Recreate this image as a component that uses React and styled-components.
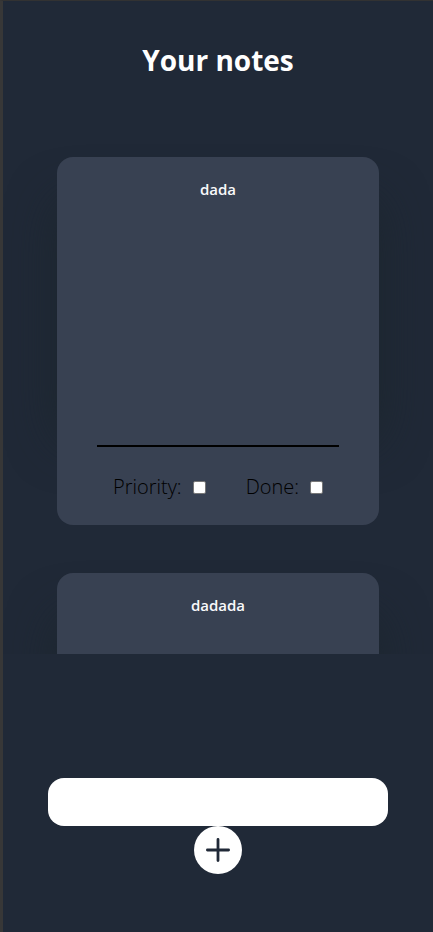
import React from "react";
import styled, { createGlobalStyle } from "styled-components";

const GlobalStyle = createGlobalStyle`
  * { box-sizing: border-box; }
  body { margin: 0; background: #202937; font-family: "Segoe UI", "Open Sans", "Noto Sans", sans-serif; }
`;

const Page = styled.main`
  min-height: 100vh;
  display: flex;
  flex-direction: column;
  align-items: center;
  border-top: 1px solid #323232;
  border-left: 3px solid #373737;
  background: #202937;
`;

const Title = styled.h1`
  margin: 41px 0 31px;
  color: #fff;
  font-size: 28px;
  font-weight: 700;
  line-height: 36px;
`;

const NoteList = styled.section`
  isolation: isolate;
  width: 100%;
  height: 545px;
  padding: 48px 54px;
  display: flex;
  flex-direction: column;
  gap: 48px;
  overflow-y: auto;
  scrollbar-width: none;
`;

const NoteCard = styled.article`
  position: relative;
  flex: none;
  min-height: 368px;
  padding: 20px 40px;
  display: flex;
  flex-direction: column;
  align-items: center;
  border-radius: 16px;
  background: #384152;

  &::before {
    content: "";
    position: absolute;
    z-index: -1;
    inset: 44px 0 84px;
    border-radius: 16px;
    box-shadow: 0 0 48px rgba(28, 38, 44, 0.9);
  }
`;

const NoteText = styled.p`
  flex: 1;
  width: 100%;
  margin: 0;
  border-bottom: 2px solid #000;
  color: #f8f9fa;
  font-size: 15px;
  font-weight: 600;
  line-height: 24px;
  text-align: center;
`;

const Options = styled.div`
  display: flex;
  gap: 40px;
  padding: 26px 0 4px;
`;

const Option = styled.label`
  display: flex;
  align-items: center;
  gap: 11px;
  color: #000;
  font-size: 20px;
  font-weight: 300;
  line-height: 28px;
`;

const Checkbox = styled.input`
  appearance: none;
  width: 13px;
  height: 13px;
  margin: 0;
  border: 1px solid #767676;
  border-radius: 2px;
  background: #fff;
  &:checked { background: #0075ff; }
`;

const NoteForm = styled.form`
  width: 100%;
  margin-top: 124px;
  padding: 0 45px;
  display: flex;
  flex-direction: column;
  align-items: center;
`;

const NoteInput = styled.input`
  width: 100%;
  height: 48px;
  padding: 0 16px;
  border: 0;
  border-radius: 16px;
  background: #fff;
  font: inherit;
`;

const AddButton = styled.button`
  width: 48px;
  height: 48px;
  padding: 0;
  display: grid;
  place-items: center;
  border: 0;
  border-radius: 50%;
  background: #fff;
  color: #202937;
`;

function Note({ text }) {
  return (
    <NoteCard>
      <NoteText>{text}</NoteText>
      <Options>
        <Option>Priority:<Checkbox type="checkbox" /></Option>
        <Option>Done:<Checkbox type="checkbox" /></Option>
      </Options>
    </NoteCard>
  );
}

export default function App() {
  return (
    <>
      <GlobalStyle />
      <Page>
        <Title>Your notes</Title>
        <NoteList>
          <Note text="dada" />
          <Note text="dadada" />
        </NoteList>
        <NoteForm onSubmit={(event) => event.preventDefault()}>
          <NoteInput type="text" aria-label="New note" />
          <AddButton type="submit" aria-label="Add note">
            <svg width="24" height="24" viewBox="0 0 24 24" fill="none" stroke="currentColor" strokeWidth="2.8" strokeLinecap="round">
              <path d="M12 1.4v21.2M1.4 12h21.2" />
            </svg>
          </AddButton>
        </NoteForm>
      </Page>
    </>
  );
}
